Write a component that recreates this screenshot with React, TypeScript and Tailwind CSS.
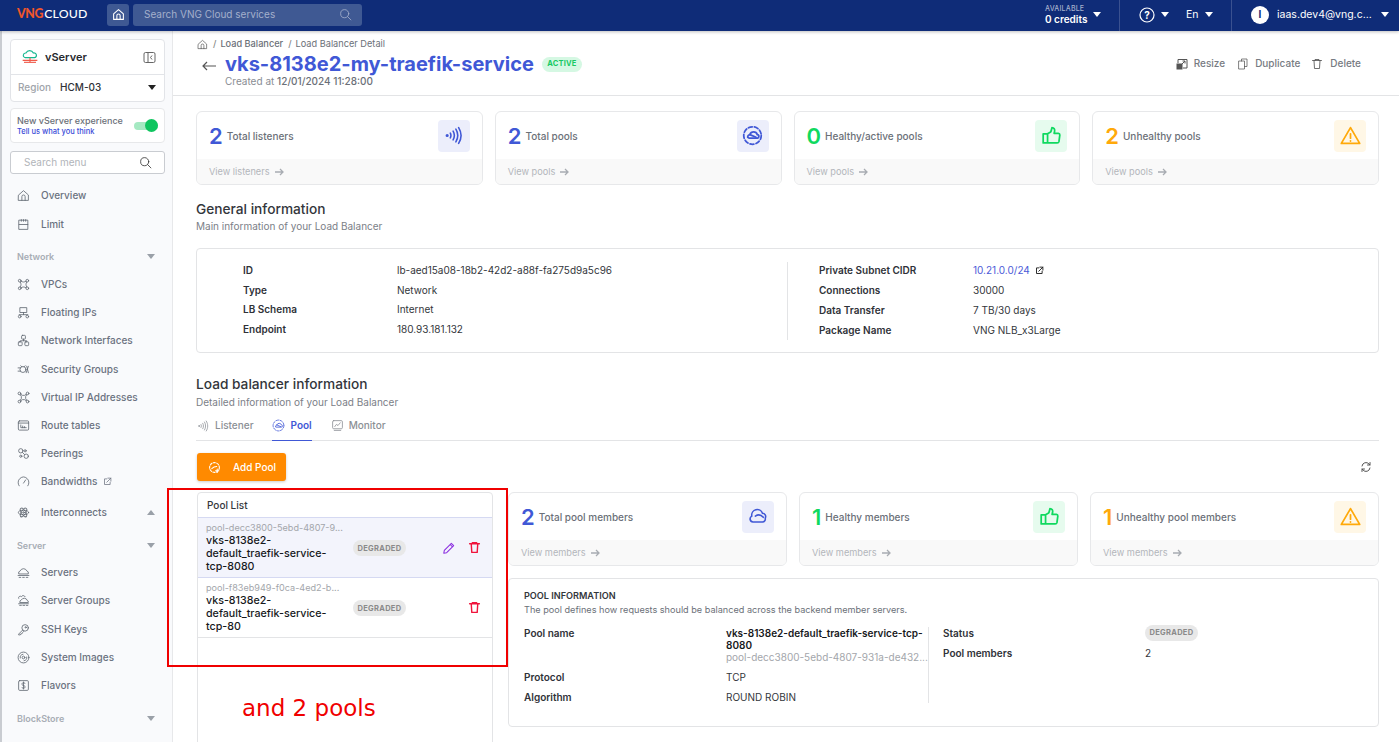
import React from "react";

const S = ({ children, size = 14, sw = 1.5, color = "currentColor", cls = "" }: any) => (
  <svg width={size} height={size} viewBox="0 0 24 24" fill="none" stroke={color} strokeWidth={sw} strokeLinecap="round" strokeLinejoin="round" className={"shrink-0 " + cls}>
    {children}
  </svg>
);

const Home = (p: any) => (
  <S {...p}><path d="M3 11 12 3l9 8v10H3z" /><path d="M9 21v-7a3 3 0 0 1 6 0v7" /></S>
);
const Limit = (p: any) => (
  <S {...p}><path d="M4 4h16v17H4z" /><path d="M4 12h16" /><path d="M8 3v3M12 3v3M16 3v3" /></S>
);
const Vpc = (p: any) => (
  <S {...p}><circle cx="5" cy="5" r="2.5" /><circle cx="19" cy="5" r="2.5" /><circle cx="5" cy="19" r="2.5" /><circle cx="19" cy="19" r="2.5" /><path d="M7.5 6c3 2 6 2 9 0M7.5 18c3-2 6-2 9 0M6 7.5c2 3 2 6 0 9M18 7.5c-2 3-2 6 0 9" /></S>
);
const Floating = (p: any) => (
  <S {...p}><rect x="6" y="3" width="12" height="9" /><path d="M12 12v4M4 16h16" /><circle cx="5" cy="19.5" r="2.5" /><circle cx="19" cy="19.5" r="2.5" /></S>
);
const Nic = (p: any) => (
  <S {...p}><rect x="8.5" y="2.5" width="7" height="7" rx="1.5" /><rect x="2.5" y="14.5" width="7" height="7" rx="1.5" /><rect x="14.5" y="14.5" width="7" height="7" rx="1.5" /><path d="M12 9.5v3M6 14.5v-2h12v2" /></S>
);
const Shield = (p: any) => (
  <S {...p}><circle cx="11" cy="12" r="5.5" /><path d="M2 9h4M2 15h4M7 5l2 2M15 5l-2 2M18 6l3 12M21 6l-4 12" /></S>
);
const Vip = (p: any) => (
  <S {...p}><circle cx="4.5" cy="4.5" r="2.5" /><circle cx="19.5" cy="4.5" r="2.5" /><circle cx="4.5" cy="19.5" r="2.5" /><circle cx="19.5" cy="19.5" r="2.5" /><path d="M7 6l3 2h4l3-2M7 18l3-2h4l3 2M6 7l2 3v4l-2 3M18 7l-2 3v4l2 3" /></S>
);
const Route = (p: any) => (
  <S {...p}><rect x="2.5" y="3.5" width="19" height="17" rx="2" /><path d="M2.5 7.5h19" /><path d="M7 11v5h10M10.5 13v3M14 14v2" /></S>
);
const Peering = (p: any) => (
  <S {...p}><circle cx="7" cy="7" r="4" /><circle cx="17" cy="17" r="4" /><circle cx="15" cy="7" r="2" /><circle cx="7" cy="17" r="2" /><path d="M10 10l4 4" /></S>
);
const Gauge = (p: any) => (
  <S {...p}><path d="M4 20a10 10 0 1 1 16 0" /><path d="M12 15l4-6" /></S>
);
const Atom = (p: any) => (
  <S {...p}><ellipse cx="12" cy="12" rx="9.5" ry="4" /><ellipse cx="12" cy="12" rx="9.5" ry="4" transform="rotate(60 12 12)" /><ellipse cx="12" cy="12" rx="9.5" ry="4" transform="rotate(120 12 12)" /><circle cx="12" cy="12" r="1.5" /></S>
);
const CloudS = (p: any) => (
  <S {...p}><path d="M3 14a4 4 0 0 1 3-5 6.5 6.5 0 0 1 12 0 4 4 0 0 1 3 5z" /><path d="M2 17.5h20" /><path d="M4 21h3M10.5 21h3M17 21h3" /></S>
);
const CloudG = (p: any) => (
  <S {...p}><path d="M3 8a3 3 0 0 1 5-3 4 4 0 0 1 7 0" /><path d="M5 15a4 4 0 0 1 3-4 6 6 0 0 1 11 1 2.5 2.5 0 0 1 2 3z" /><path d="M3 18h18M5 21h3M11 21h3M17 21h3" /></S>
);
const Key = (p: any) => (
  <S {...p}><circle cx="15" cy="9" r="6" /><circle cx="16" cy="8" r="1.2" /><path d="M10.5 13 3 20.5V22h3l1-2h2l1-2 2.500-2.500" /></S>
);
const Disc = (p: any) => (
  <S {...p}><circle cx="12" cy="12" r="10" /><circle cx="12" cy="12" r="2.5" /><path d="M6 13a6 6 0 0 1 5-7M18 11a6 6 0 0 1-5 7" /></S>
);
const Dollar = (p: any) => (
  <S {...p}><rect x="3" y="3" width="18" height="18" rx="2" /><path d="M15 8.500c-.5-1-1.500-1.500-3-1.500-2 0-3 1-3 2.500s1.500 2 3 2.500 3 1 3 2.500-1 2.500-3 2.500c-1.500 0-2.500-.5-3-1.500M12 5.500v13" /></S>
);
const Ext = (p: any) => (
  <S {...p}><path d="M10 5H4v15h15v-6" /><path d="M13 3h8v8M21 3 10 14" /></S>
);
const Caret = ({ up = false, cls = "border-t-[#9aa0a8]" }: any) => (
  <span className={up ? "block w-0 h-0 border-x-[4.5px] border-x-transparent border-b-[5px] border-b-[#9aa0a8]" : "block w-0 h-0 border-x-[4.5px] border-x-transparent border-t-[5px] " + cls} />
);
const Search = (p: any) => (
  <S {...p}><circle cx="10.500" cy="10.500" r="7.500" /><path d="m16 16 6 6" /></S>
);
const Waves = (p: any) => (
  <S {...p}><circle cx="4" cy="12" r="1" /><path d="M8 9c1 2 1 4 0 6M11.500 6.500c2 3.500 2 7.500 0 11M15 4c3 5 3 11 0 16M18.500 2c4 6.500 4 13.500 0 20" /></S>
);
const DashedCloud = (p: any) => (
  <S {...p}><circle cx="12" cy="12" r="10" strokeDasharray="4.500 2.500" /><path d="M6.500 14a3 3 0 0 1 2.500-3 4.500 4.500 0 0 1 8.500 0 2 2 0 0 1-.5 4H8z" /><path d="M9 11l7 3" /></S>
);
const Thumb = (p: any) => (
  <S {...p}><path d="M7.500 10H2.500v10.500h5zM7.500 10l3.500-2c1-1.500 1-3 1.500-5 2.500 0 3.500 2 3 4.500L15 9.500h5c1 0 1.500 1 1.500 2l-1 7.500c-.2 1-1 1.500-2 1.500H7.500" /></S>
);
const Warn = (p: any) => (
  <S {...p}><path d="M12 3 22.500 21h-21z" /><path d="M12 10v5M12 18v.3" /></S>
);
const Cloud2 = (p: any) => (
  <S {...p}><path d="M5 19a4 4 0 0 1-1.500-7.500A7 7 0 0 1 17 8a4 4 0 0 1 3.500 6 4 4 0 0 1-3.500 5z" /><path d="M8 11.500c3-2 7-2 10 1.500" /></S>
);
const Arrow = () => (
  <svg width="9" height="8" viewBox="0 0 9 8" fill="none" stroke="#a8acb2" strokeWidth="1.3" className="shrink-0"><path d="M0 4h8M5 1l3 3-3 3" /></svg>
);
const Trash = (p: any) => (
  <S {...p}><path d="M3 5h18M8 5V3h8v2M6 5l1 16h10l1-16" /></S>
);
const Pencil = (p: any) => (
  <S {...p}><path d="M3 21l1-5L16 4l4 4L8 20zM14 6l4 4" /></S>
);

const netItems: [string, any, boolean?][] = [
  ["VPCs", Vpc],
  ["Floating IPs", Floating],
  ["Network Interfaces", Nic],
  ["Security Groups", Shield],
  ["Virtual IP Addresses", Vip],
  ["Route tables", Route],
  ["Peerings", Peering],
  ["Bandwidths", Gauge, true],
];
const srvItems: [string, any][] = [
  ["Servers", CloudS],
  ["Server Groups", CloudG],
  ["SSH Keys", Key],
  ["System Images", Disc],
  ["Flavors", Dollar],
];

const NavRow = ({ label, Icon, ext, h = "h-[28.2px]" }: any) => (
  <div className={"flex items-center pl-[15px] pr-5 text-[10px] text-[#6b7280] font-medium " + h}>
    <Icon size={13} cls="text-[#5f6670] mr-[11px]" />
    <span>{label}</span>
    {ext && <span className="ml-[6px]"><Ext size={9} sw={2} /></span>}
  </div>
);
const GroupHead = ({ label, mt, mb }: any) => (
  <div className={"flex items-center justify-between pl-[15px] pr-[17px] text-[9px] font-semibold text-[#a8adb5] " + mt + " " + mb}>
    <span>{label}</span>
    <Caret />
  </div>
);

const Stat = ({ n, label, link, color, bg, Icon, isw = 1.6, isz = 19 }: any) => (
  <div className="rounded-[6px] border border-[#e7e8ea] overflow-hidden flex flex-col bg-white">
    <div className="h-[47px] flex items-center justify-between pl-3 pr-[12px]">
      <div className="flex items-center">
        <span className={"text-[22px] leading-none font-semibold " + color}>{n}</span>
        <span className="ml-[4px] mt-[1px] text-[10px] text-[#6b7078] font-medium">{label}</span>
      </div>
      <div className={"w-8 h-8 rounded-[4px] flex items-center justify-center " + bg + " " + color}>
        <Icon size={isz} sw={isw} />
      </div>
    </div>
    <div className="h-[25px] pt-[1px] bg-[#f9f9f9] flex items-center gap-[5px] pl-3 text-[9.200px] text-[#b3b6bb]">
      <span>{link}</span>
      <Arrow />
    </div>
  </div>
);

const Badge = () => (
  <span className="inline-flex items-center justify-center rounded-full bg-[#e8e8e8] text-[#8a8a8a] text-[7.500px] font-bold tracking-[0.3px] w-[53px] h-[16px]">DEGRADED</span>
);

const InfoRow = ({ k, v, h = "h-[19.700px]", children }: any) => (
  <div className={"flex items-center " + h}>
    <span className="font-semibold text-[#2f3238] w-[154px]">{k}</span>
    {children || <span className="text-[#33363b]">{v}</span>}
  </div>
);

export default function App() {
  return (
    <div className="w-[1399px] h-[742px] overflow-hidden relative bg-white flex flex-col font-['Inter',sans-serif] text-[10px]">
      {/* Top bar */}
      <div className="h-[31px] pb-[2px] shrink-0 bg-[#0f2c78] flex items-center text-white shadow-[0_1px_3px_rgba(0,0,0,0.25)] z-10">
        <div className="w-[107px] pl-[17px] flex items-center text-[12.300px] leading-none font-['Lato',sans-serif]">
          <span className="font-black text-[#f0562a] tracking-[-0.3px]">VNG</span>
          <span className="font-medium ml-[1px] tracking-[0.2px]">CLOUD</span>
        </div>
        <div className="w-[22px] h-[22px] rounded-[3px] bg-[#3f5993] flex items-center justify-center">
          <Home size={13} sw={2} />
        </div>
        <div className="ml-1 w-[229px] h-[22px] rounded-[3px] bg-[#3f5993] flex items-center justify-between pl-[11px] pr-[10px] text-[10px] text-[#a4b0cc]">
          <span>Search VNG Cloud services</span>
          <Search size={13} />
        </div>
        <div className="flex-1" />
        <div className="flex items-center justify-between h-full w-[56px]">
          <div className="leading-none">
            <div className="text-[7px] text-[#a4b0cc] font-medium tracking-[0.2px]">AVAILABLE</div>
            <div className="text-[10px] font-semibold mt-[2px]">0 credits</div>
          </div>
          <Caret cls="border-t-white" />
        </div>
        <div className="w-[1px] h-[31px] self-start bg-[#3a5190] ml-[18px]" />
        <div className="flex items-center h-full w-[111px] pl-[19px]">
          <svg width="16" height="16" viewBox="0 0 16 16" className="shrink-0">
            <circle cx="8" cy="8" r="7" fill="none" stroke="white" strokeWidth="1.200" />
            <text x="8" y="11.500" textAnchor="middle" fontSize="10" fontWeight="700" fill="white" fontFamily="Inter">?</text>
          </svg>
          <span className="ml-[6px]"><Caret cls="border-t-white" /></span>
          <span className="ml-[17px] text-[10.500px]">En</span>
          <span className="ml-[6px]"><Caret cls="border-t-white" /></span>
        </div>
        <div className="w-[1px] h-[31px] self-start bg-[#3a5190]" />
        <div className="flex items-center h-full w-[167px] pl-[19px]">
          <span className="w-[18px] h-[18px] rounded-full bg-white text-[#0f2c78] text-[10px] font-bold flex items-center justify-center">I</span>
          <span className="ml-2 text-[10.500px]">iaas.dev4@vng.c...</span>
          <span className="ml-[9px]"><Caret cls="border-t-white" /></span>
        </div>
      </div>

      <div className="flex flex-1 min-h-0">
        {/* Sidebar */}
        <div className="w-[173px] shrink-0 bg-[#f9fafc] border-r border-l-2 border-l-[#c9ccd1] border-r-[#e7e8ea] flex flex-col overflow-hidden">
          <div className="mt-2 ml-2 w-[155px] h-[63px] rounded-[4px] border border-[#e2e4e8] bg-white shrink-0 flex flex-col">
            <div className="h-[35px] flex items-center pl-[11px] pr-[8px] border-b border-[#e2e4e8]">
              <svg width="16" height="14" viewBox="0 0 24 20" fill="none" strokeWidth="1.700" className="shrink-0">
                <path d="M5 11a3.500 3.500 0 0 1 1-7 6 6 0 0 1 11 0 3.500 3.500 0 0 1 2 7z" stroke="#17b890" />
                <path d="M1 15h22M12 11v7" stroke="#f05a4a" />
                <path d="M3 18h18" stroke="#f05a4a" />
              </svg>
              <span className="ml-[7px] text-[11px] font-semibold text-[#25282d]">vServer</span>
              <svg width="13" height="13" viewBox="0 0 13 13" fill="none" stroke="#666" strokeWidth="1" className="ml-auto">
                <rect x="1" y="1.500" width="11" height="10" rx="1.500" />
                <path d="M5 1.500v10M9 4.500 7.500 6.500 9 8.500" />
              </svg>
            </div>
            <div className="flex-1 flex items-center pl-[7px] pr-[8px] pb-[1px]">
              <span className="text-[#a0a4aa] font-medium">Region</span>
              <span className="ml-[9px] text-[#2f3238] font-medium">HCM-03</span>
              <span className="ml-auto"><Caret cls="border-t-[#222]" /></span>
            </div>
          </div>
          <div className="mt-[6px] ml-2 w-[155px] h-[35px] rounded-[4px] border border-[#e7e8ea] bg-white shrink-0 flex items-center pl-[6px] pr-[6px]">
            <div className="leading-none">
              <div className="text-[9px] text-[#6b7078] font-medium">New vServer experience</div>
              <div className="text-[7.500px] text-[#3b4bd8] font-medium mt-[3px]">Tell us what you think</div>
            </div>
            <div className="ml-auto relative w-[24px] h-[8px] rounded-full bg-[#a5e9c2]">
              <span className="absolute right-0 top-[-3px] w-[13px] h-[13px] rounded-full bg-[#0fc55f]" />
            </div>
          </div>
          <div className="mt-[8px] ml-2 w-[155px] h-[23px] rounded-[3px] border border-[#c9ccd1] bg-white shrink-0 flex items-center justify-between pl-[13px] pr-[12px] text-[#b1b4b9]">
            <span className="text-[10px]">Search menu</span>
            <Search size={13} color="#333" />
          </div>
          <div className="mt-[7px] shrink-0">
            <NavRow label="Overview" Icon={Home} h="h-[29px]" />
            <NavRow label="Limit" Icon={Limit} h="h-[29px]" />
          </div>
          <GroupHead label="Network" mt="mt-[11px]" mb="mb-[7px]" />
          <div className="shrink-0">
            {netItems.map(([l, I, e]) => <NavRow key={l} label={l} Icon={I} ext={e} />)}
            <div className="mt-[2px] flex items-center pr-[17px]">
              <NavRow label="Interconnects" Icon={Atom} />
              <span className="ml-auto"><Caret up /></span>
            </div>
          </div>
          <GroupHead label="Server" mt="mt-[13px]" mb="mb-[6px]" />
          <div className="shrink-0">
            {srvItems.map(([l, I]) => <NavRow key={l} label={l} Icon={I} />)}
          </div>
          <GroupHead label="BlockStore" mt="mt-[12px]" mb="mb-[13px]" />
          <div className="shrink-0"><NavRow label="Volumes" Icon={CloudS} /></div>
        </div>

        {/* Main */}
        <div className="flex-1 min-w-0 flex flex-col">
          <div className="h-[65px] shrink-0 border-b border-[#e3e4e6] flex pl-[24px] pr-[20px]">
            <div className="pt-[6px]">
              <div className="flex items-center text-[9.200px] text-[#6b7078] font-medium leading-none h-[14px]">
                <Home size={11} cls="text-[#555]" />
                <span className="ml-[5px] text-[#888]">/</span>
                <span className="ml-[4px]">Load Balancer</span>
                <span className="ml-[5px] text-[#888]">/</span>
                <span className="ml-[4px] font-normal">Load Balancer Detail</span>
              </div>
              <div className="flex items-center mt-[2px] h-[22px]">
                <svg width="14" height="10" viewBox="0 0 14 10" fill="none" stroke="#555" strokeWidth="1.200" className="ml-[5px] mt-[4px]">
                  <path d="M14 5H1M5 1 1 5l4 4" />
                </svg>
                <span className="ml-[9px] text-[20px] font-bold leading-none text-[#4058d6]">vks-8138e2-my-traefik-service</span>
                <span className="ml-2 w-[40px] h-[15px] rounded-full bg-[#d5f8e3] text-[#17c964] text-[7.500px] font-bold flex items-center justify-center tracking-[0.2px]">ACTIVE</span>
              </div>
              <div className="ml-[28px] mt-[1px] text-[10px] text-[#898d93] leading-none">
                Created at <span className="text-[#6b7078] font-medium">12/01/2024 11:28:00</span>
              </div>
            </div>
            <div className="ml-auto mr-[18px] flex items-center self-start mt-[25px] text-[10px] text-[#777b82] font-medium">
              <svg width="12" height="12" viewBox="0 0 12 12" fill="none" stroke="#555" strokeWidth="1" className="mr-[6px]">
                <path d="M2 5V1.500h9V10H7" />
                <rect x="1" y="6" width="5" height="5" fill="#555" />
                <path d="M6 6l3-3M6.500 3H9v2.500" />
              </svg>
              Resize
              <span className="ml-[12px] mr-[6px]"><S size={12} sw={1.500} cls="text-[#555]"><path d="M9 6V2h11v15h-5" /><path d="M4 6h11v16H4z" /></S></span>
              Duplicate
              <span className="ml-[11px] mr-[7px]"><Trash size={12} sw={1.700} cls="text-[#555]" /></span>
              Delete
            </div>
          </div>

          <div className="pl-[23px] pr-[20px] flex-1 min-h-0">
            <div className="mt-[15px] grid grid-cols-4 gap-[12px]">
              <Stat n="2" label="Total listeners" link="View listeners" color="text-[#4058d6]" bg="bg-[#eceefb]" Icon={Waves} isw={2} />
              <Stat n="2" label="Total pools" link="View pools" color="text-[#4058d6]" bg="bg-[#eceefb]" Icon={DashedCloud} isw={2} isz={21} />
              <Stat n="0" label="Healthy/active pools" link="View pools" color="text-[#0fd95f]" bg="bg-[#e6fbee]" Icon={Thumb} isw={2} isz={21} />
              <Stat n="2" label="Unhealthy pools" link="View pools" color="text-[#ffa90a]" bg="bg-[#fff7e6]" Icon={Warn} isw={2} isz={21} />
            </div>

            <div className="mt-[15px] text-[13.700px] font-medium text-[#33363b] leading-[18px]">General information</div>
            <div className="text-[10px] text-[#7b8087] leading-[16px]">Main information of your Load Balancer</div>

            <div className="mt-[14px] h-[105px] rounded-[4px] border border-[#e3e4e6] flex pl-[46px] pt-[11px]">
              <div className="w-[544px] text-[10px] leading-none">
                <InfoRow k="ID" v="lb-aed15a08-18b2-42d2-a88f-fa275d9a5c96" />
                <InfoRow k="Type" v="Network" />
                <InfoRow k="LB Schema" v="Internet" />
                <InfoRow k="Endpoint" v="180.93.181.132" />
              </div>
              <div className="w-[1px] h-[78px] mt-[2px] bg-[#e3e4e6]" />
              <div className="pl-[31px] text-[10px] leading-none">
                <InfoRow k="Private Subnet CIDR" h="h-[20px]">
                  <span className="text-[#4b5bd8]">10.21.0.0/24</span>
                  <span className="ml-[5px] text-[#222]"><Ext size={9} sw={2.500} /></span>
                </InfoRow>
                <InfoRow k="Connections" v="30000" h="h-[20px]" />
                <InfoRow k="Data Transfer" v="7 TB/30 days" h="h-[20px]" />
                <InfoRow k="Package Name" v="VNG NLB_x3Large" h="h-[20px]" />
              </div>
            </div>

            <div className="mt-[22px] text-[13.700px] font-medium text-[#33363b] leading-[18px]">Load balancer information</div>
            <div className="text-[10px] text-[#7b8087] leading-[18px]">Detailed information of your Load Balancer</div>

            <div className="mt-[2px] h-[28px] flex border-b border-[#e3e4e6] text-[10px] font-medium pl-[1px]">
              <div className="flex items-center gap-[6px] text-[#8b8f95] pb-[2px]"><Waves size={12} />Listener</div>
              <div className="ml-[18px] h-[28px] flex items-center gap-[6px] text-[#4058d6] font-semibold border-b border-[#4058d6] pb-[2px]"><DashedCloud size={13} />Pool</div>
              <div className="ml-[19px] flex items-center gap-[5px] text-[#8b8f95] pb-[2px]">
                <S size={13}><rect x="3" y="3" width="18" height="15" rx="2" /><path d="M7 14l3-4 3 2 4-5M6 21h12" /></S>Monitor
              </div>
            </div>

            <div className="mt-[12px] h-[28px] flex items-center justify-between pl-[1px]">
              <div className="w-[89px] h-[28px] rounded-[3px] bg-[#ff8a00] text-white font-medium flex items-center pl-[11px] shadow-[0_1px_3px_rgba(0,0,0,0.2)]">
                <S size={13} cls="mr-[12px]" sw={2}><circle cx="12" cy="12" r="9" strokeDasharray="4 2.500" /><path d="M7 14c3-3 6-4 9-4M17 15v6M14 18h6" /></S>
                Add Pool
              </div>
              <span className="text-[#555] mr-[7px]">
                <S size={12} sw={2}><path d="M4 10a8 8 0 0 1 14-4l2 2M20 3v5h-5M20 14a8 8 0 0 1-14 4l-2-2M4 21v-5h5" /></S>
              </span>
            </div>

            <div className="mt-[11px] flex gap-[15px] pl-[1px]">
              <div className="w-[296px] h-[300px] shrink-0 rounded-t-[4px] border border-[#e3e4e6]">
                <div className="h-[24px] pt-[1px] flex items-center pl-[9px] text-[10px] font-medium text-[#33363b]">Pool List</div>
                <div className="h-[61px] bg-[#f3f4fc] border-y border-[#d5d9f2] flex items-center pl-[8px] relative">
                  <div className="w-[138px] leading-[13px]">
                    <div className="text-[9.100px] leading-[12px] text-[#a3a6ab] whitespace-nowrap">pool-decc3800-5ebd-4807-9...</div>
                    <div className="text-[10.700px] text-[#17191c] font-medium">vks-8138e2-default_traefik-service-tcp-8080</div>
                  </div>
                  <span className="ml-[9px] mt-[1px]"><Badge /></span>
                  <span className="ml-[36px] text-[#8b2fe0]"><Pencil size={14} sw={1.800} /></span>
                  <span className="ml-[12px] text-[#f0143c]"><Trash size={13} sw={2.600} /></span>
                </div>
                <div className="h-[60px] border-b border-[#e3e4e6] flex items-center pl-[8px]">
                  <div className="w-[138px] leading-[13px]">
                    <div className="text-[9.100px] leading-[12px] text-[#a3a6ab] whitespace-nowrap">pool-f83eb949-f0ca-4ed2-b...</div>
                    <div className="text-[10.700px] text-[#17191c] font-medium">vks-8138e2-default_traefik-service-tcp-80</div>
                  </div>
                  <span className="ml-[9px] mt-[1px]"><Badge /></span>
                  <span className="ml-[62px] text-[#f0143c]"><Trash size={13} sw={2.600} /></span>
                </div>
              </div>

              <div className="flex-1 min-w-0">
                <div className="grid grid-cols-[279px_279px_1fr] gap-[12px]">
                  <Stat n="2" label="Total pool members" link="View members" color="text-[#4058d6]" bg="bg-[#eceefb]" Icon={Cloud2} isw={2} />
                  <Stat n="1" label="Healthy members" link="View members" color="text-[#0fd95f]" bg="bg-[#e6fbee]" Icon={Thumb} isw={2} isz={21} />
                  <Stat n="1" label="Unhealthy pool members" link="View members" color="text-[#ffa90a]" bg="bg-[#fff7e6]" Icon={Warn} isw={2} isz={21} />
                </div>
                <div className="mt-[12px] h-[149px] rounded-[4px] border border-[#e3e4e6] pl-[15px] pt-[10px]">
                  <div className="text-[9.100px] font-semibold text-[#33363b] leading-[14px]">POOL INFORMATION</div>
                  <div className="text-[9.140px] text-[#6b7078] leading-[14px]">The pool defines how requests should be balanced across the backend member servers.</div>
                  <div className="flex mt-[10px] text-[10px] leading-[12px]">
                    <div className="w-[404px]">
                      <div className="flex">
                        <span className="w-[202px] font-semibold text-[#2f3238]">Pool name</span>
                        <div className="w-[201px]">
                          <div className="font-semibold text-[#17191c]">vks-8138e2-default_traefik-service-tcp-8080</div>
                          <div className="text-[#a3a6ab] whitespace-nowrap">pool-decc3800-5ebd-4807-931a-de432...</div>
                        </div>
                      </div>
                      <div className="flex mt-[8px]">
                        <span className="w-[202px] font-semibold text-[#2f3238]">Protocol</span>
                        <span className="text-[#33363b]">TCP</span>
                      </div>
                      <div className="flex mt-[8px]">
                        <span className="w-[202px] font-semibold text-[#2f3238]">Algorithm</span>
                        <span className="text-[#33363b]">ROUND ROBIN</span>
                      </div>
                    </div>
                    <div className="w-[1px] h-[76px] bg-[#e3e4e6]" />
                    <div className="pl-[14px] -mt-[2px]">
                      <div className="flex items-center">
                        <span className="w-[202px] font-semibold text-[#2f3238]">Status</span>
                        <Badge />
                      </div>
                      <div className="flex mt-[6px]">
                        <span className="w-[202px] font-semibold text-[#2f3238]">Pool members</span>
                        <span className="text-[#33363b]">2</span>
                      </div>
                    </div>
                  </div>
                </div>
              </div>
            </div>
          </div>
        </div>
      </div>

      {/* Annotation overlay */}
      <div className="absolute left-[167px] top-[488px] w-[341px] h-[179px] border-2 border-[#f00000] pointer-events-none" />
      <div className="absolute left-[242px] top-[693px] text-[23px] leading-[30px] text-[#f00000] font-['DejaVu_Sans',sans-serif] pointer-events-none">and 2 pools</div>
    </div>
  );
}
